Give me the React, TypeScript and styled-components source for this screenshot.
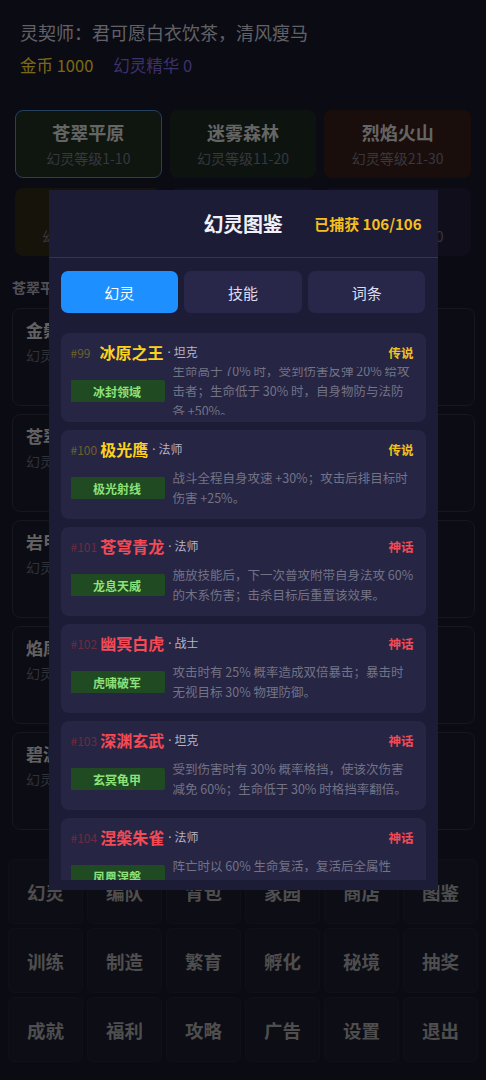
import React from 'react';
import styled, { createGlobalStyle } from 'styled-components';

const GlobalStyle = createGlobalStyle`
  html, body { margin: 0; padding: 0; background: #161626; }
  body {
    font-family: "Noto Sans CJK SC", "Noto Sans", sans-serif;
    -webkit-font-smoothing: antialiased;
  }
  *, *::before, *::after { box-sizing: border-box; }
`;

const Page = styled.div`
  padding: 20px 0 18px;
  background: #161626;
  min-height: 1080px;
`;

const Profile = styled.div`
  padding: 0 20px;
`;

const PlayerName = styled.div`
  font-size: 18px;
  line-height: 24px;
  color: #c2c2ce;
`;

const Resources = styled.div`
  margin-top: 10px;
  display: flex;
  gap: 20px;
  font-size: 16.5px;
  line-height: 22px;
`;

const Resource = styled.span<{ $color: string }>`
  color: ${(p) => p.$color};
`;

const RegionGrid = styled.div`
  margin-top: 34px;
  padding: 0 15px;
  display: grid;
  grid-template-columns: repeat(3, 1fr);
  column-gap: 8px;
  row-gap: 10px;
`;

const RegionCard = styled.div<{ $tint: string; $active?: boolean }>`
  height: 68px;
  border-radius: 8px;
  background: ${(p) => p.$tint};
  border: 1.5px solid ${(p) => (p.$active ? '#4682bc' : 'transparent')};
  display: flex;
  flex-direction: column;
  align-items: center;
  padding-top: 9.5px;
`;

const RegionName = styled.div`
  font-size: 18px;
  font-weight: 700;
  line-height: 22px;
  color: #cacaca;
`;

const RegionRange = styled.div`
  margin-top: 6px;
  font-size: 14px;
  line-height: 18px;
  color: #6e6e80;
`;

const SectionTitle = styled.div`
  margin-top: 21px;
  padding-left: 12px;
  font-size: 14px;
  font-weight: 700;
  line-height: 20px;
  color: #a2a2b0;
`;

const CreatureList = styled.div`
  margin-top: 11px;
  padding: 0 11px 0 12px;
  display: flex;
  flex-direction: column;
  gap: 8px;
`;

const CreatureCard = styled.div`
  height: 98px;
  border-radius: 8px;
  background: #191928;
  border: 1px solid #2e2e40;
  padding: 11px 13px;
`;

const CreatureName = styled.div`
  font-size: 17px;
  font-weight: 700;
  line-height: 20px;
  color: #c4c4c4;
`;

const CreatureInfo = styled.div`
  margin-top: 6px;
  font-size: 14px;
  line-height: 18px;
  color: #626270;
`;

const MenuGrid = styled.div`
  margin-top: 29px;
  padding: 0 8px;
  display: grid;
  grid-template-columns: repeat(6, 1fr);
  gap: 4px;
`;

const MenuCell = styled.div`
  height: 65px;
  border-radius: 6px;
  background: #1b1b2b;
  border: 1px solid #202031;
  display: flex;
  align-items: center;
  justify-content: center;
  font-size: 18.5px;
  font-weight: 700;
  color: #9c9c9c;
`;

const Backdrop = styled.div`
  position: fixed;
  inset: 0;
  background: rgba(0, 0, 0, 0.5);
  display: flex;
  align-items: center;
  justify-content: center;
`;

const Modal = styled.div`
  width: 389px;
  height: 700px;
  background: #1d1c37;
  display: flex;
  flex-direction: column;
  padding-bottom: 10px;
`;

const ModalHeader = styled.div`
  height: 68px;
  flex-shrink: 0;
  display: grid;
  grid-template-columns: 1fr auto 1fr;
  align-items: center;
  padding: 0 16px;
  border-bottom: 1px solid #35344f;
`;

const ModalTitle = styled.div`
  grid-column: 2;
  font-size: 20px;
  font-weight: 700;
  color: #f0f0f8;
  letter-spacing: -0.3px;
`;

const CaughtCount = styled.div`
  justify-self: end;
  font-size: 15px;
  font-weight: 700;
  color: #f5bf1f;
`;

const Tabs = styled.div`
  margin: 13px 12px 0;
  display: grid;
  grid-template-columns: repeat(3, 1fr);
  gap: 6px;
  flex-shrink: 0;
`;

const Tab = styled.div<{ $active?: boolean }>`
  height: 42px;
  border-radius: 7px;
  display: flex;
  align-items: center;
  justify-content: center;
  font-size: 15px;
  color: ${(p) => (p.$active ? '#ffffff' : '#dcdcec')};
  background: ${(p) => (p.$active ? '#1e8fff' : '#28274a')};
`;

const DexList = styled.div`
  margin-top: 13px;
  flex: 1;
  min-height: 0;
  overflow: hidden;
  padding: 7px 12px 0;
  display: flex;
  flex-direction: column;
  gap: 8px;
`;

const DexCard = styled.div`
  height: 89px;
  flex-shrink: 0;
  border-radius: 8px;
  background: #262544;
  padding: 9px 12px 0 10px;
`;

const DexHeader = styled.div`
  height: 20px;
  display: flex;
  align-items: center;
`;

const DexIndex = styled.span<{ $myth?: boolean }>`
  min-width: 26px;
  margin-right: 3px;
  font-size: 12px;
  color: ${(p) => (p.$myth ? '#6c2c40' : '#6e602e')};
`;

const DexName = styled.span<{ $myth?: boolean }>`
  font-size: 16px;
  font-weight: 700;
  color: ${(p) => (p.$myth ? '#f44a55' : '#fcd21c')};
`;

const DexRole = styled.span`
  margin-left: 4px;
  font-family: "Noto Sans", "Noto Sans CJK SC", sans-serif;
  font-size: 12px;
  color: #b4b4c6;
`;

const DexRarity = styled.span<{ $myth?: boolean }>`
  margin-left: auto;
  font-size: 12.5px;
  font-weight: 700;
  color: ${(p) => (p.$myth ? '#f44a55' : '#eec21e')};
`;

const DexBody = styled.div`
  margin-top: 5px;
  height: 48px;
  display: flex;
  align-items: center;
  gap: 8px;
  overflow: hidden;
`;

const SkillBadge = styled.div`
  width: 95px;
  height: 22px;
  flex-shrink: 0;
  margin-left: -1px;
  border-radius: 2px;
  background: #1f4a22;
  color: #8ee27c;
  font-size: 12px;
  font-weight: 700;
  display: flex;
  align-items: center;
  justify-content: center;
`;

const SkillDesc = styled.div`
  flex: 1;
  font-size: 12.5px;
  line-height: 20px;
  color: #737386;
`;

const regions = [
  { name: '苍翠平原', range: '幻灵等级1-10', tint: '#1c2c1e', active: true },
  { name: '迷雾森林', range: '幻灵等级11-20', tint: '#1a261c' },
  { name: '烈焰火山', range: '幻灵等级21-30', tint: '#341c18' },
  { name: '黄沙古域', range: '幻灵等级31-40', tint: '#2a2614' },
  { name: '深海遗迹', range: '幻灵等级41-50', tint: '#182238' },
  { name: '幽冥之境', range: '幻灵等级51-60', tint: '#221c38' },
];

const creatures = [
  { name: '金鬃狮', info: '幻灵等级 3 · 土系' },
  { name: '苍翠藤灵', info: '幻灵等级 5 · 木系' },
  { name: '岩甲巨兽', info: '幻灵等级 7 · 土系' },
  { name: '焰尾狐', info: '幻灵等级 8 · 火系' },
  { name: '碧波水灵', info: '幻灵等级 10 · 水系' },
];

const menu = [
  '幻灵', '编队', '背包', '家园', '商店', '图鉴',
  '训练', '制造', '繁育', '孵化', '秘境', '抽奖',
  '成就', '福利', '攻略', '广告', '设置', '退出',
];

const dex = [
  {
    no: 99, name: '冰原之王', role: '坦克', myth: false, skill: '冰封领域',
    desc: '生命高于 70% 时，受到伤害反弹 20% 给攻击者；生命低于 30% 时，自身物防与法防各 +50%。',
  },
  {
    no: 100, name: '极光鹰', role: '法师', myth: false, skill: '极光射线',
    desc: '战斗全程自身攻速 +30%；攻击后排目标时伤害 +25%。',
  },
  {
    no: 101, name: '苍穹青龙', role: '法师', myth: true, skill: '龙息天威',
    desc: '施放技能后，下一次普攻附带自身法攻 60% 的木系伤害；击杀目标后重置该效果。',
  },
  {
    no: 102, name: '幽冥白虎', role: '战士', myth: true, skill: '虎啸破军',
    desc: '攻击时有 25% 概率造成双倍暴击；暴击时无视目标 30% 物理防御。',
  },
  {
    no: 103, name: '深渊玄武', role: '坦克', myth: true, skill: '玄冥龟甲',
    desc: '受到伤害时有 30% 概率格挡，使该次伤害减免 60%；生命低于 30% 时格挡率翻倍。',
  },
  {
    no: 104, name: '涅槃朱雀', role: '法师', myth: true, skill: '凤凰涅槃',
    desc: '阵亡时以 60% 生命复活，复活后全属性 +20%（每场战斗限一次）。',
  },
];

export default function App() {
  return (
    <>
      <GlobalStyle />
      <Page>
        <Profile>
          <PlayerName>灵契师：君可愿白衣饮茶，清风瘦马</PlayerName>
          <Resources>
            <Resource $color="#f2d22a">金币 1000</Resource>
            <Resource $color="#7662d8">幻灵精华 0</Resource>
          </Resources>
        </Profile>
        <RegionGrid>
          {regions.map((r) => (
            <RegionCard key={r.name} $tint={r.tint} $active={r.active}>
              <RegionName>{r.name}</RegionName>
              <RegionRange>{r.range}</RegionRange>
            </RegionCard>
          ))}
        </RegionGrid>
        <SectionTitle>苍翠平原</SectionTitle>
        <CreatureList>
          {creatures.map((c) => (
            <CreatureCard key={c.name}>
              <CreatureName>{c.name}</CreatureName>
              <CreatureInfo>{c.info}</CreatureInfo>
            </CreatureCard>
          ))}
        </CreatureList>
        <MenuGrid>
          {menu.map((m) => (
            <MenuCell key={m}>{m}</MenuCell>
          ))}
        </MenuGrid>
      </Page>
      <Backdrop>
        <Modal>
          <ModalHeader>
            <ModalTitle>幻灵图鉴</ModalTitle>
            <CaughtCount>已捕获 106/106</CaughtCount>
          </ModalHeader>
          <Tabs>
            <Tab $active>幻灵</Tab>
            <Tab>技能</Tab>
            <Tab>词条</Tab>
          </Tabs>
          <DexList>
            {dex.map((d) => (
              <DexCard key={d.no}>
                <DexHeader>
                  <DexIndex $myth={d.myth}>#{d.no}</DexIndex>
                  <DexName $myth={d.myth}>{d.name}</DexName>
                  <DexRole>· {d.role}</DexRole>
                  <DexRarity $myth={d.myth}>{d.myth ? '神话' : '传说'}</DexRarity>
                </DexHeader>
                <DexBody>
                  <SkillBadge>{d.skill}</SkillBadge>
                  <SkillDesc>{d.desc}</SkillDesc>
                </DexBody>
              </DexCard>
            ))}
          </DexList>
        </Modal>
      </Backdrop>
    </>
  );
}
